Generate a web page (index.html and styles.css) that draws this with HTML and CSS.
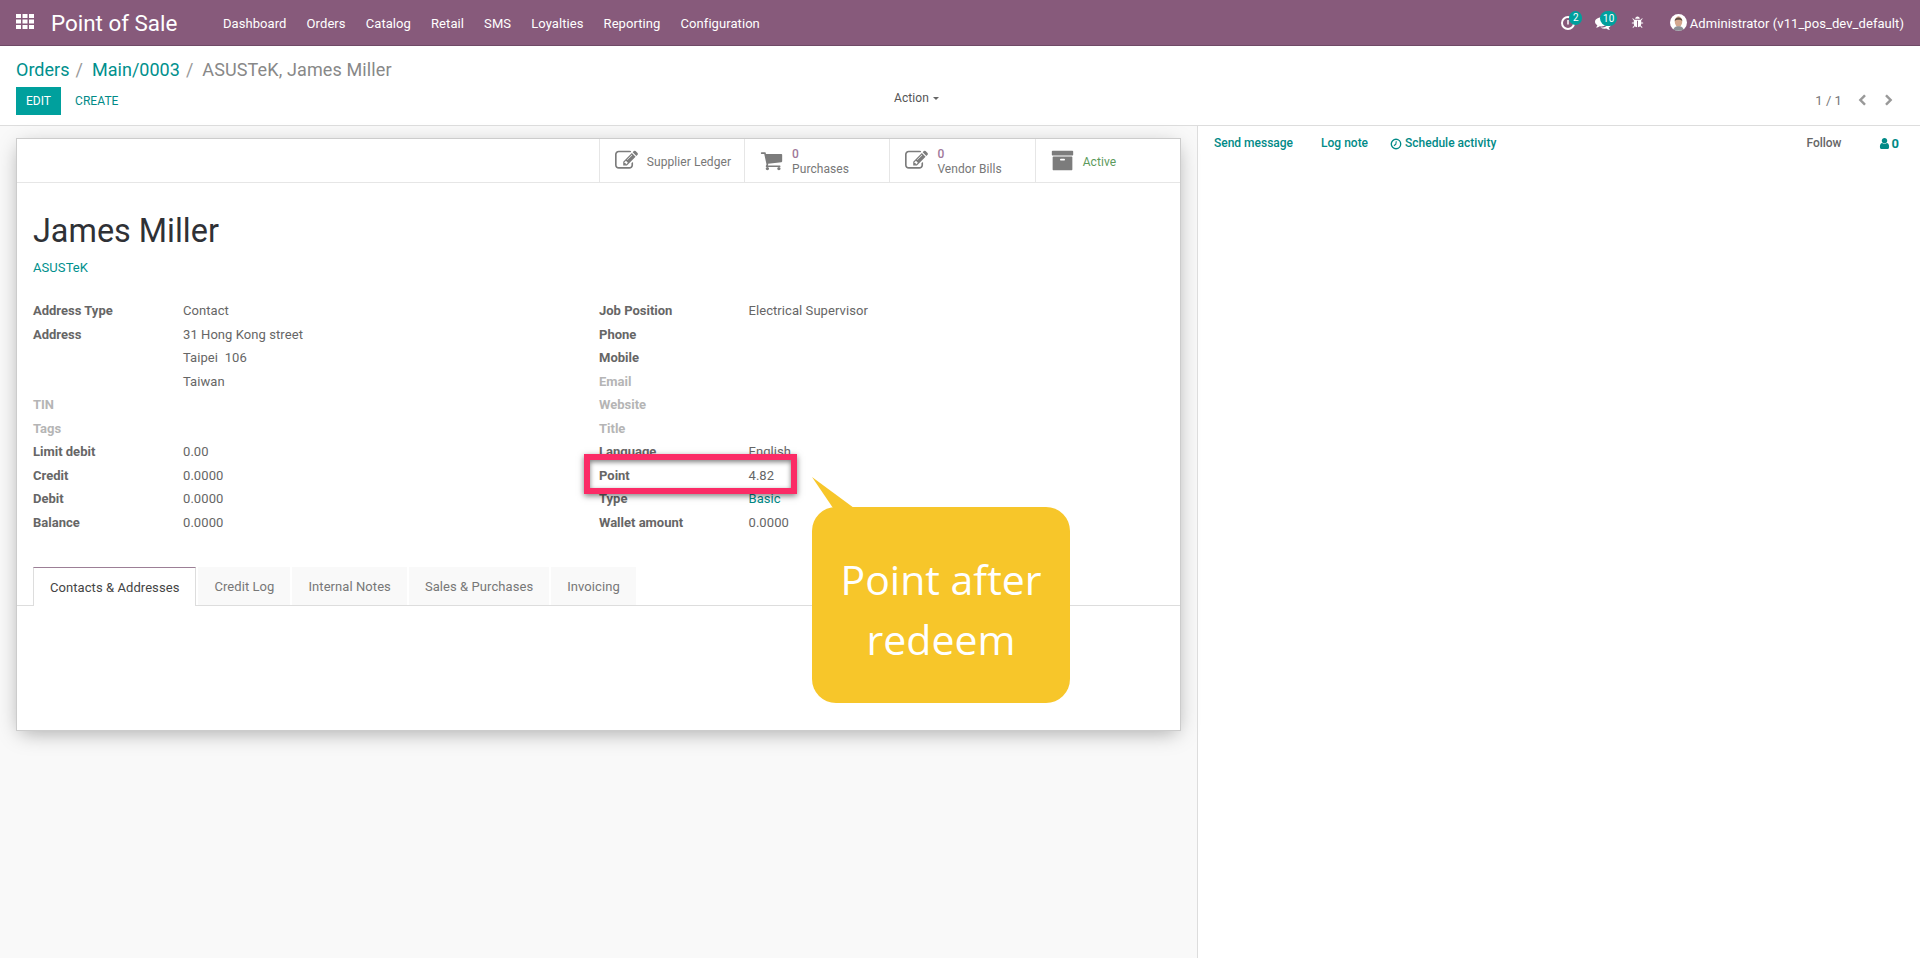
FILE: index.html
```html
<!DOCTYPE html>
<html>
	<head>
		<meta charset="UTF-8">
		<title>ASUSTeK, James Miller - Odoo</title>
		<link rel="stylesheet" href="styles.css">
	</head>
	<body>
		<header class="navbar">
			<svg class="apps" viewBox="0 0 18 15"><path d="M0 0h5v4H0zM6.500 0h5v4h-5zM13 0h5v4h-5zM0 5.500h5v4H0zM6.500 5.500h5v4h-5zM13 5.500h5v4h-5zM0 11h5v4H0zM6.500 11h5v4h-5zM13 11h5v4h-5z"/></svg>
			<span class="brand">Point of Sale</span>
			<nav class="menu">
				<a>Dashboard</a>
				<a>Orders</a>
				<a>Catalog</a>
				<a>Retail</a>
				<a>SMS</a>
				<a>Loyalties</a>
				<a>Reporting</a>
				<a>Configuration</a>
			</nav>
			<div class="systray">
				<span class="tray-item tray-clock">
					<svg viewBox="0 0 16 16"><circle cx="8" cy="8" r="6" fill="none" stroke="#fff" stroke-width="2"/><path d="M8 5v4.500" fill="none" stroke="#fff" stroke-width="1.500"/></svg>
					<b class="badge">2</b>
				</span>
				<span class="tray-item tray-chat">
					<svg viewBox="0 0 1792 1792"><path d="M1408 768q0 139-94 257t-256.500 186.500-353.500 68.500q-86 0-176-16-124 88-278 128-36 9-86 16h-3q-11 0-20.500-8t-11.500-21q-1-3-1-6.500t.5-6.500 2-6l2.500-5 3.500-5.500 4-5 4.500-5 4-4.500q5-6 23-25t26-29.500 22.500-29 25-38.500 20.500-44q-124-72-195-177t-71-224q0-139 94-257t256.500-186.500 353.500-68.500 353.500 68.500 256.500 186.500 94 257zm384 256q0 120-71 224.500t-195 176.500q10 24 20.500 44t25 38.500 22.500 29 26 29.500 23 25q1 1 4 4.500t4.500 5 4 5 3.500 5.500l2.500 5 2 6 .5 6.500-1 6.500q-3 14-13 22t-22 7q-50-7-86-16-154-40-278-128-90 16-176 16-271 0-472-132 58 4 88 4 161 0 309-45t264-129q125-92 192-212t67-254q0-77-23-152 129 71 204 178t75 230z" fill="#fff"/></svg>
					<b class="badge">10</b>
				</span>
				<span class="tray-item tray-bug">
					<svg viewBox="0 0 1792 1792"><path d="M1696 960q0 26-19 45t-45 19h-224q0 171-67 290l208 209q19 19 19 45t-19 45q-18 19-45 19t-45-19l-198-197q-5 5-15 13t-42 28.500-65 36.500-82 29-97 13v-896h-128v896q-51 0-101.500-13.500t-87-33-66-39-43.500-32.500l-15-14-183 207q-20 21-48 21-24 0-43-16-19-18-20.500-44.500t15.500-46.500l202-227q-58-114-58-274h-224q-26 0-45-19t-19-45 19-45 45-19h224v-294l-173-173q-19-19-19-45t19-45 45-19 45 19l173 173h844l173-173q19-19 45-19t45 19 19 45-19 45l-173 173v294h224q26 0 45 19t19 45zm-480-576h-640q0-133 93.500-226.500t226.500-93.500 226.500 93.500 93.500 226.500z" fill="#fff"/></svg>
				</span>
				<span class="user">
					<svg class="avatar" viewBox="0 0 18 18"><circle cx="9" cy="9" r="9" fill="#fff"/><ellipse cx="9" cy="8" rx="4" ry="5.500" fill="#d3a78f"/><path d="M5 7.500C4.500 2.500 13.500 2.500 13 7.500 11.500 5.500 6.500 5.500 5 7.500z" fill="#5d4c42"/><path d="M3.500 16.500c1-3 3.500-3.500 5.500-3.500s4.500.5 5.500 3.500c-3 1.800-8 1.800-11 0z" fill="#8d9096"/></svg>
					Administrator (v11_pos_dev_default)
				</span>
			</div>
		</header>

		<section class="control-panel">
			<div class="cp-top">
				<a>Orders</a><span class="sep">/</span>
				<a>Main/0003</a><span class="sep">/</span>
				<span class="current">ASUSTeK, James Miller</span>
			</div>
			<div class="cp-bottom">
				<div class="cp-buttons">
					<button class="btn-edit">EDIT</button>
					<button class="btn-create">CREATE</button>
				</div>
				<div class="cp-action">Action <i class="caret"></i></div>
				<div class="pager">
					<span>1 / 1</span>
					<svg viewBox="0 0 1792 1792"><path d="M1427 301l-531 531 531 531q19 19 19 45t-19 45l-166 166q-19 19-45 19t-45-19l-742-742q-19-19-19-45t19-45l742-742q19-19 45-19t45 19l166 166q19 19 19 45t-19 45z" transform="translate(0 64)"/></svg>
					<svg class="flip" viewBox="0 0 1792 1792"><path d="M1427 301l-531 531 531 531q19 19 19 45t-19 45l-166 166q-19 19-45 19t-45-19l-742-742q-19-19-19-45t19-45l742-742q19-19 45-19t45 19l166 166q19 19 19 45t-19 45z" transform="translate(0 64)"/></svg>
				</div>
			</div>
		</section>

		<main class="content">
			<div class="form-pane">
				<div class="sheet">
					<div class="button-box">
						<div class="stat">
							<svg class="stat-icon" viewBox="0 0 1792 1792"><path d="M888 1184l116-116-152-152-116 116v56h96v96h56zm440-720q-16-16-33 1l-350 350q-17 17-1 33t33-1l350-350q17-17 1-33zm80 594v190q0 119-84.500 203.500t-203.500 84.500h-832q-119 0-203.500-84.500t-84.500-203.500v-832q0-119 84.500-203.500t203.500-84.500h832q63 0 117 25 15 7 18 23 3 17-9 29l-49 49q-14 14-32 8-23-6-45-6h-832q-66 0-113 47t-47 113v832q0 66 47 113t113 47h832q66 0 113-47t47-113v-126q0-13 9-22l64-64q15-15 35-7t20 29zm-96-738l288 288-672 672h-288v-288zm444 132l-92 92-288-288 92-92q28-28 68-28t68 28l152 152q28 28 28 68t-28 68z"/></svg>
							<div class="stat-text stat-single">Supplier Ledger</div>
						</div>
						<div class="stat">
							<svg class="stat-icon" viewBox="0 0 1792 1792"><path d="M704 1536q0 52-38 90t-90 38-90-38-38-90 38-90 90-38 90 38 38 90zm896 0q0 52-38 90t-90 38-90-38-38-90 38-90 90-38 90 38 38 90zm128-1088v512q0 24-16.500 42.500t-40.500 21.500l-1044 122q13 60 13 70 0 16-24 64h920q26 0 45 19t19 45-19 45-45 19h-1024q-26 0-45-19t-19-45q0-11 8-31.500t16-36 21.500-40 15.500-29.500l-177-823h-204q-26 0-45-19t-19-45 19-45 45-19h256q16 0 28.500 6.500t19.500 15.500 13 24.500 8 26 5.500 29.500 4.500 26h1201q26 0 45 19t19 45z"/></svg>
							<div class="stat-text"><b>0</b>Purchases</div>
						</div>
						<div class="stat">
							<svg class="stat-icon" viewBox="0 0 1792 1792"><path d="M888 1184l116-116-152-152-116 116v56h96v96h56zm440-720q-16-16-33 1l-350 350q-17 17-1 33t33-1l350-350q17-17 1-33zm80 594v190q0 119-84.500 203.500t-203.500 84.500h-832q-119 0-203.500-84.500t-84.500-203.500v-832q0-119 84.500-203.500t203.500-84.500h832q63 0 117 25 15 7 18 23 3 17-9 29l-49 49q-14 14-32 8-23-6-45-6h-832q-66 0-113 47t-47 113v832q0 66 47 113t113 47h832q66 0 113-47t47-113v-126q0-13 9-22l64-64q15-15 35-7t20 29zm-96-738l288 288-672 672h-288v-288zm444 132l-92 92-288-288 92-92q28-28 68-28t68 28l152 152q28 28 28 68t-28 68z"/></svg>
							<div class="stat-text"><b>0</b>Vendor Bills</div>
						</div>
						<div class="stat">
							<svg class="stat-icon" viewBox="0 0 1792 1792"><path d="M1088 832q0-26-19-45t-45-19h-256q-26 0-45 19t-19 45 19 45 45 19h256q26 0 45-19t19-45zm576-192v960q0 26-19 45t-45 19h-1408q-26 0-45-19t-19-45v-960q0-26 19-45t45-19h1408q26 0 45 19t19 45zm64-448v256q0 26-19 45t-45 19h-1536q-26 0-45-19t-19-45v-256q0-26 19-45t45-19h1536q26 0 45 19t19 45z"/></svg>
							<div class="stat-text stat-single active">Active</div>
						</div>
					</div>
					<div class="sheet-body">
						<h1 class="title">James Miller</h1>
						<a class="company">ASUSTeK</a>
						<div class="groups">
							<div class="fields">
								<label>Address Type</label><span>Contact</span>
								<label>Address</label><span>31 Hong Kong street</span>
								<label></label><span>Taipei &nbsp;106</span>
								<label></label><span>Taiwan</span>
								<label class="empty">TIN</label><span></span>
								<label class="empty">Tags</label><span></span>
								<label>Limit debit</label><span>0.00</span>
								<label>Credit</label><span>0.0000</span>
								<label>Debit</label><span>0.0000</span>
								<label>Balance</label><span>0.0000</span>
							</div>
							<div class="fields fields-right">
								<label>Job Position</label><span>Electrical Supervisor</span>
								<label>Phone</label><span></span>
								<label>Mobile</label><span></span>
								<label class="empty">Email</label><span></span>
								<label class="empty">Website</label><span></span>
								<label class="empty">Title</label><span></span>
								<label>Language</label><span>English</span>
								<label>Point</label><span>4.82</span>
								<label>Type</label><span class="link">Basic</span>
								<label>Wallet amount</label><span>0.0000</span>
							</div>
						</div>
						<div class="tabs">
							<a class="tab tab-active">Contacts &amp; Addresses</a>
							<a class="tab">Credit Log</a>
							<a class="tab">Internal Notes</a>
							<a class="tab">Sales &amp; Purchases</a>
							<a class="tab">Invoicing</a>
						</div>
					</div>
				</div>
			</div>
			<aside class="chatter">
				<a>Send message</a>
				<a>Log note</a>
				<a class="schedule"><svg viewBox="0 0 14 14"><circle cx="7" cy="7" r="5.500" fill="none" stroke="#018a87" stroke-width="1.600"/><path d="M7.300 3.800 6.800 7.300 4.600 9" fill="none" stroke="#018a87" stroke-width="1.300"/></svg>Schedule activity</a>
				<span class="follow">Follow</span>
				<span class="followers"><svg viewBox="128 128 1536 1536"><path d="M1536 1399q0 109-62.500 187t-150.500 78h-854q-88 0-150.500-78t-62.500-187q0-85 8.500-160.500t31.500-152 58.500-131 94-89 134.500-34.500q131 128 313 128t313-128q76 0 134.500 34.500t94 89 58.500 131 31.500 152 8.500 160.500zm-256-887q0 159-112.500 271.500t-271.500 112.500-271.500-112.500-112.500-271.500 112.500-271.500 271.500-112.500 271.500 112.500 112.500 271.500z"/></svg>0</span>
			</aside>
		</main>

		<!-- annotations over the screenshot -->
		<div class="mark"></div>
		<svg class="callout-tail" viewBox="0 0 42 31"><path d="M0 0 21 31H42z"/></svg>
		<div class="callout">Point after<br>redeem</div>
	</body>
</html>
```

FILE: styles.css
```css
*{margin:0;padding:0;box-sizing:border-box;}
html,body{height:100%;}
body{
	position:relative;
	display:flex;
	flex-direction:column;
	height:958px;
	overflow:hidden;
	font-family:Roboto,"Noto Sans",sans-serif;
	font-size:13px;
	letter-spacing:.07px;
	color:#666;
	background:#fff;
}
a{color:#018a87;text-decoration:none;}

/* top bar */
.navbar{
	display:flex;
	align-items:center;
	height:46px;
	padding:0 16px;
	background:#875a7b;
	border-bottom:1px solid #6f4a66;
	color:#fff;
}
.apps{width:18px;height:15px;fill:#fff;margin-top:-2px;}
.brand{font-size:22.400px;margin-left:17px;width:172px;padding-top:1px;letter-spacing:0;}
.menu{display:flex;gap:20.100px;padding-top:1px;}
.menu a{color:#fff;}
.systray{display:flex;align-items:center;margin-left:auto;}
.tray-item{position:relative;display:block;width:16px;height:16px;}
.tray-item svg{display:block;width:100%;height:100%;}
.tray-chat{margin-left:19px;}
.tray-bug{margin-left:20px;width:13px;height:13px;}
.badge{
	position:absolute;
	top:-4px;
	left:9.500px;
	min-width:13px;
	height:14px;
	border-radius:7px;
	background:#00a09d;
	color:#fff;
	font-size:10px;
	font-weight:400;
	line-height:14px;
	text-align:center;
}
.tray-chat .badge{left:5.500px;min-width:17px;height:15px;line-height:15px;border-radius:8px;}
.user{display:flex;align-items:center;gap:3px;margin-left:26px;padding-top:1px;}
.avatar{width:17px;height:17px;margin-top:-2px;}

/* control panel */
.control-panel{
	height:80px;
	padding:0 16px;
	border-bottom:1px solid #ddd;
	background:#fff;
}
.cp-top{
	display:flex;
	align-items:center;
	height:41px;
	padding-top:6px;
	font-size:18px;
	letter-spacing:.02px;
	white-space:pre;
}
.cp-top a{color:#00908d;}
.sep{color:#999;margin:0 9px 0 6px;}
.current{color:#888;letter-spacing:.12px;}
.cp-bottom{position:relative;display:flex;align-items:center;height:28px;}
.cp-buttons{display:flex;gap:14px;align-items:center;width:878px;}
.cp-buttons button{border:0;font-family:inherit;font-size:12px;letter-spacing:.07px;}
.btn-edit{width:45px;height:28px;background:#00a09d;color:#fff;}
.btn-create{background:none;color:#018a87;}
.cp-action{color:#555;font-size:12px;padding-bottom:6px;}
.caret{
	display:inline-block;
	margin-left:1px;
	vertical-align:2px;
	border-top:3px solid #666;
	border-left:3.500px solid transparent;
	border-right:3.500px solid transparent;
}
.pager{display:flex;align-items:center;margin-left:auto;margin-right:9px;padding-bottom:2px;}
.pager span{margin-right:14px;color:#777;}
.pager svg{width:12px;height:12px;fill:#999;}
.pager .flip{transform:scaleX(-1);margin-left:15px;}

/* main area */
.content{display:flex;flex:1;min-height:0;}
.form-pane{
	width:1197px;
	padding:12px 16px;
	background:#f9f9f9;
}
.sheet{
	width:1165px;
	height:593px;
	background:#fff;
	border:1px solid #ccc;
	box-shadow:0 5px 20px -4px rgba(0,0,0,.35);
}
.button-box{
	display:flex;
	justify-content:flex-end;
	height:44px;
	border-bottom:1px solid #e6e6e6;
}
.stat{
	display:flex;
	align-items:center;
	width:145.300px;
	padding-left:15px;
	border-left:1px solid #e6e6e6;
}
.stat-icon{flex:none;width:23px;height:23px;margin-right:9px;fill:#7c7c7c;}
.stat-text{padding-top:2px;font-size:12px;line-height:15px;color:#777;}
.stat-text b{display:block;font-weight:500;color:#a0789a;}
.stat-single{padding-top:4px;}
.active{color:#5c9a5c;}
.sheet-body{padding:0 16px;}
.title{
	margin-top:28px;
	font-size:32.400px;
	font-weight:400;
	line-height:40px;
	letter-spacing:0;
	color:#2f3136;
}
.company{display:block;margin-top:7px;line-height:20px;color:#00908d;}
.groups{display:grid;grid-template-columns:566px 1fr;margin-top:21px;}
.fields{
	display:grid;
	grid-template-columns:150px 1fr;
	grid-auto-rows:23.500px;
	align-items:center;
}
.fields-right{grid-template-columns:149.500px 1fr;}
.fields label{font-weight:700;letter-spacing:0;color:#666;}
.fields .empty{color:#b5b5b5;}
.link{color:#018a87;}
.tabs{
	display:flex;
	gap:2px;
	height:39px;
	margin:33px -16px 0;
	padding-left:16px;
	border-bottom:1px solid #ddd;
}
.tab{
	height:38px;
	padding:0 16px;
	background:#f9f9f9;
	color:#777;
	line-height:39px;
}
.tab-active{
	height:39px;
	padding:0 16px;
	background:#fff;
	border:1px solid #ddd;
	border-top-color:#9c7f96;
	border-bottom:0;
	color:#444;
	line-height:39px;
}

/* chatter */
.chatter{
	display:flex;
	align-items:flex-start;
	flex:1;
	padding:10px 21px 0 16px;
	border-left:1px solid #ddd;
	font-weight:500;
	font-size:12px;
	letter-spacing:0;
	line-height:15px;
}
.chatter a{margin-right:28px;color:#018a87;}
.chatter a:nth-child(2){margin-right:22px;}
.schedule{display:flex;align-items:center;gap:3px;}
.schedule svg{width:12px;height:12px;}
.follow{margin-left:auto;margin-right:37px;color:#666;}
.followers{display:flex;align-items:center;gap:2px;color:#018a87;font-weight:700;font-size:13px;}
.followers svg{width:11px;height:11px;fill:#018a87;}

/* annotations */
.mark{
	position:absolute;
	left:584px;
	top:454px;
	width:213px;
	height:40px;
	border:6px solid #fb2b66;
	box-shadow:0 2px 6px rgba(0,0,0,.5),inset 0 2px 5px rgba(0,0,0,.5);
}
.callout{
	position:absolute;
	left:812px;
	top:507px;
	width:258px;
	height:196px;
	padding-top:42px;
	border-radius:24px;
	background:#f7c62a;
	color:#fff;
	font-family:"Open Sans",sans-serif;
	font-size:41px;
	font-weight:500;
	letter-spacing:0;
	line-height:60px;
	text-align:center;
}
.callout-tail{
	position:absolute;
	left:812px;
	top:477px;
	width:42px;
	height:31px;
	fill:#f7c62a;
}
```
